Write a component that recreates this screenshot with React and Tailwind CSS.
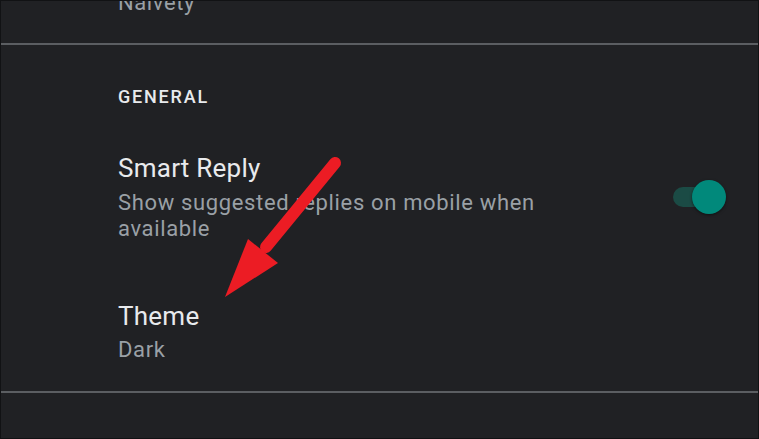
import React from "react";

function Toggle() {
  return (
    <div className="flex items-center">
      <div className="w-[50px] h-[20px] rounded-full bg-[#1b4b45]" />
      <div className="w-[34px] h-[34px] -ml-[31px] rounded-full bg-[#01897b] shadow-[0_1px_3px_rgba(0,0,0,0.5)]" />
    </div>
  );
}

function Arrow() {
  return (
    <svg
      className="absolute left-[-1px] top-[-1px] pointer-events-none"
      width="759"
      height="439"
      viewBox="0 0 759 439"
    >
      <line x1="335" y1="163" x2="266" y2="247" stroke="#ec1c24" strokeWidth="12" strokeLinecap="round" />
      <polygon points="225,297 248,239 278,263" fill="#ec1c24" />
    </svg>
  );
}

export default function App() {
  return (
    <div className="relative w-[759px] h-[439px] overflow-hidden bg-[#202124] border border-[#111214] font-['Roboto',sans-serif]">
      <div className="h-[42px] pl-[117px] overflow-hidden">
        <p className="-mt-[11px] text-[22px] leading-[26px] tracking-[0.6px] text-[#9aa0a6]">Naivety</p>
      </div>
      <div className="border-t-2 border-[#5b5e62]" />

      <div className="pl-[117px] pt-[40px]">
        <h2 className="text-[18px] leading-[24px] tracking-[1.8px] font-medium text-[#e8eaed]">GENERAL</h2>
      </div>

      <div className="mt-[43px] pl-[117px] pr-[32px] flex items-center justify-between">
        <div className="w-[470px]">
          <p className="text-[26px] leading-[32px] tracking-[0.25px] text-[#e8eaed]">Smart Reply</p>
          <p className="mt-[6px] text-[22px] leading-[26px] tracking-[0.65px] text-[#9aa0a6]">
            Show suggested replies on mobile when available
          </p>
        </div>
        <Toggle />
      </div>

      <div className="mt-[58px] pl-[117px]">
        <p className="text-[26px] leading-[32px] tracking-[0.25px] text-[#e8eaed]">Theme</p>
        <p className="mt-[5px] text-[22px] leading-[26px] tracking-[0.65px] text-[#9aa0a6]">Dark</p>
      </div>

      <div className="mt-[28px] border-t-2 border-[#5b5e62]" />

      <Arrow />
    </div>
  );
}
